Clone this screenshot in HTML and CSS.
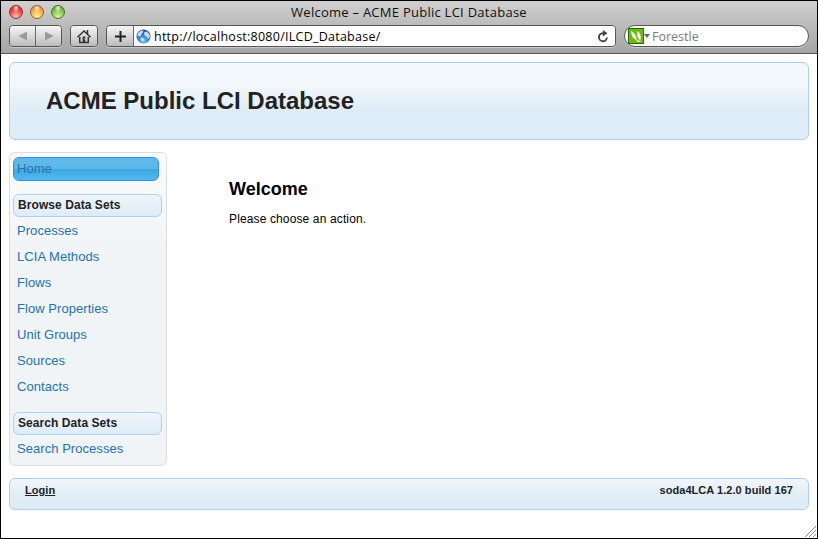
FILE: index.html
```html
<!DOCTYPE html>
<html lang="en">
<head>
<meta charset="utf-8">
<title>Welcome – ACME Public LCI Database</title>
<link rel="stylesheet" href="styles.css">
</head>
<body>
<div class="window">
  <div class="chrome">
    <div class="titlebar">
      <div class="lights"><i class="light red"></i><i class="light amber"></i><i class="light green"></i></div>
      <div class="title">Welcome – ACME Public LCI Database</div>
    </div>
    <div class="toolbar">
      <div class="group nav">
        <span class="btn"><svg width="10" height="10" viewBox="0 0 10 10"><path d="M9 .5v9L.5 5z" fill="#999"/></svg></span>
        <span class="btn"><svg width="10" height="10" viewBox="0 0 10 10"><path d="M1 .5v9L9.5 5z" fill="#999"/></svg></span>
      </div>
      <div class="group home">
        <span class="btn"><svg width="16" height="15" viewBox="0 0 16 15"><path d="M1.500 8.200L8 2 14.500 8.200M11.500 1v4M3.700 8v5.500h8.600V8" fill="none" stroke="#333" stroke-width="1.500"/><path d="M6.700 7.500h2.600v2H8.200v1h1.100V13H6.700z" fill="#333"/></svg></span>
      </div>
      <div class="group address">
        <span class="btn"><svg width="11" height="11" viewBox="0 0 11 11"><path d="M5.500 0v11M0 5.500h11" stroke="#222" stroke-width="2"/></svg></span>
        <div class="url">
          <svg width="15" height="15" viewBox="0 0 15 15"><defs><radialGradient id="globe" cx=".5" cy=".8" r=".75"><stop offset="0" stop-color="#6fc4f8"/><stop offset=".6" stop-color="#2b78cf"/><stop offset="1" stop-color="#1c4a94"/></radialGradient></defs><circle cx="7.500" cy="7.500" r="7" fill="url(#globe)"/><path d="M2 4L5 1.500l2.500.3-.8 2L5.500 5l-1 2-1.500.5L1.500 7zM8.500 3l2.500-.5 2.500 3 .3 3-1.600 1-1.200-1.500L9.500 7 8 5.500zM4.500 8.500l3 .8.500 1.700-1.500 2L5 11z" fill="#e3f1fc" opacity=".85"/></svg>
          <span class="url-text">http://localhost:8080/ILCD_Database/</span>
          <svg class="reload" width="12" height="13" viewBox="0 0 12 13"><path d="M7.500 3.200H5.800A4 4 0 1 0 9.900 7.500" fill="none" stroke="#444" stroke-width="1.900"/><path d="M5.800 0l4.700 3.200-4.700 3.200z" fill="#444"/></svg>
        </div>
      </div>
      <div class="search">
        <svg width="16" height="16" viewBox="0 0 16 16"><rect x=".5" y=".5" width="15" height="15" fill="#76b512" stroke="#16700b"/><path d="M3 3C6.500 5 8.500 7.500 8.500 12 5 10.500 3.200 7.500 3 3zM9.500 3C12.800 5.500 13.300 9 12.300 12.500 9.500 10.500 8.500 7 9.500 3zM6.500 10.500l7 3.200-3.500.3z" fill="#f2f8e8"/></svg>
        <svg class="caret" width="6" height="4" viewBox="0 0 6 4"><path d="M0 0h6L3 4z" fill="#666"/></svg>
        <span class="search-text">Forestle</span>
      </div>
    </div>
  </div>
  <div class="page">
    <header class="banner"><h1>ACME Public LCI Database</h1></header>
    <div class="body">
      <nav class="menu">
        <a class="item active">Home</a>
        <h3>Browse Data Sets</h3>
        <a class="item">Processes</a>
        <a class="item">LCIA Methods</a>
        <a class="item">Flows</a>
        <a class="item">Flow Properties</a>
        <a class="item">Unit Groups</a>
        <a class="item">Sources</a>
        <a class="item">Contacts</a>
        <h3>Search Data Sets</h3>
        <a class="item">Search Processes</a>
      </nav>
      <main>
        <h2>Welcome</h2>
        <p>Please choose an action.</p>
      </main>
    </div>
    <footer><a class="login">Login</a><span>soda4LCA 1.2.0 build 167</span></footer>
  </div>
  <svg class="grip" width="11" height="11" viewBox="0 0 11 11"><path d="M0 11L11 0M4 11l7-7M8 11l3-3" stroke="#888" stroke-width="1"/></svg>
</div>
</body>
</html>
```
FILE: styles.css
```css
* { box-sizing: border-box; }
body { margin: 0; background: #fff; font-family: "Liberation Sans", Arial, sans-serif; }
svg { display: block; flex: none; }
.window { position: relative; width: 818px; height: 539px; border: 1px solid #000; overflow: hidden; }

.chrome {
  height: 53px;
  border-bottom: 1px solid #555;
  background: linear-gradient(#d0d0d0, #a4a4a4);
  font-family: "Open Sans", "Noto Sans", sans-serif;
}
.titlebar { position: relative; height: 24px; }
.lights { position: absolute; left: 8px; top: 4px; display: flex; gap: 7px; }
.light { width: 14px; height: 14px; border-radius: 50%; border: 1px solid; }
.red { border-color: #8f2f2c; background: radial-gradient(ellipse at 50% 12%, rgba(255,255,255,.85), transparent 38%), radial-gradient(circle at 50% 90%, #ffc2bb, #ed3c3c 60%, #c02828); }
.amber { border-color: #a35d22; background: radial-gradient(ellipse at 50% 12%, rgba(255,255,255,.85), transparent 38%), radial-gradient(circle at 50% 90%, #fff3a0, #f2a33c 65%, #c8741f); }
.green { border-color: #47762b; background: radial-gradient(ellipse at 50% 12%, rgba(255,255,255,.85), transparent 38%), radial-gradient(circle at 50% 90%, #d3f79d, #78b845 65%, #4f8f2e); }
.title { text-align: center; font-size: 13px; line-height: 22px; letter-spacing: .26px; color: #111; }

.toolbar { display: flex; gap: 8px; padding: 0 8px; }
.group { display: flex; height: 22px; border: 1px solid #555; border-radius: 4px; overflow: hidden; box-shadow: 0 1px 0 #c8c8c8; }
.btn { flex: 1; display: flex; align-items: center; justify-content: center; background: linear-gradient(#f6f6f6, #bcbcbc); }
.nav { width: 53px; }
.nav .btn + .btn { border-left: 1px solid #666; }
.home { width: 28px; }
.address { width: 510px; }
.address .btn { flex: none; width: 27px; border-right: 1px solid #666; }
.url { flex: 1; display: flex; align-items: center; padding: 0 6px 0 2px; background: #fff; }
.url-text { margin-left: 3px; padding-top: 2px; font-size: 12.5px; line-height: 20px; letter-spacing: .25px; color: #000; }
.reload { margin-left: auto; }
.search { display: flex; align-items: center; width: 185px; height: 22px; padding-left: 3px; border: 1px solid #555; border-radius: 11px; background: #fff; box-shadow: 0 1px 0 #c8c8c8; }
.search-text { margin-left: 2px; padding-top: 2px; font-size: 12.5px; line-height: 20px; color: #7b7b7b; }

.page { padding: 8px; }
.banner { height: 78px; padding: 0 36px; border: 1px solid #aed0ea; border-radius: 6px; background: linear-gradient(#f2f7fb 28%, #deecf7 64%); }
h1 { margin: 0; font-size: 24px; line-height: 75px; color: #222; }
.body { display: flex; margin-top: 12px; }
.menu { width: 158px; height: 314px; padding: 4px 4px 0 3px; border: 1px solid #ddd; border-radius: 6px; background: linear-gradient(#fafbfd, #f0f4f7 35%); }
.item { display: block; height: 26px; padding-left: 4px; font-size: 13px; line-height: 26px; letter-spacing: .05px; color: #2573ab; }
.active { width: 146px; height: 24px; padding-left: 3px; border: 1px solid #2694e8; border-radius: 6px; line-height: 22px; background: linear-gradient(#5fb9e9, #5db7e8 50%, #3aa7e2 50%, #55b8ef); }
h3 { width: 149px; height: 23px; margin: 13px 0 1px; padding-left: 4px; border: 1px solid #aed0ea; border-radius: 6px; font-size: 12px; line-height: 20px; letter-spacing: .07px; color: #222; background: linear-gradient(#eff5fb, #deecf7); }
.item + h3 { margin-top: 12px; }
.active + h3 { margin-top: 13px; }
main { padding: 27px 0 0 62px; }
h2 { margin: 0; font-size: 18px; line-height: 20px; color: #000; }
p { margin: 12px 0 0; font-size: 12px; line-height: 16px; letter-spacing: .13px; color: #000; }
footer { display: flex; justify-content: space-between; height: 32px; margin-top: 12px; padding: 0 15px; border: 1px solid #aed0ea; border-radius: 6px; font-size: 11px; font-weight: bold; line-height: 23px; letter-spacing: .05px; color: #222; background: linear-gradient(#f1f6fb, #deecf7 65%); }
.login { text-decoration: underline; }
.grip { position: absolute; right: 1px; bottom: 1px; }
```
